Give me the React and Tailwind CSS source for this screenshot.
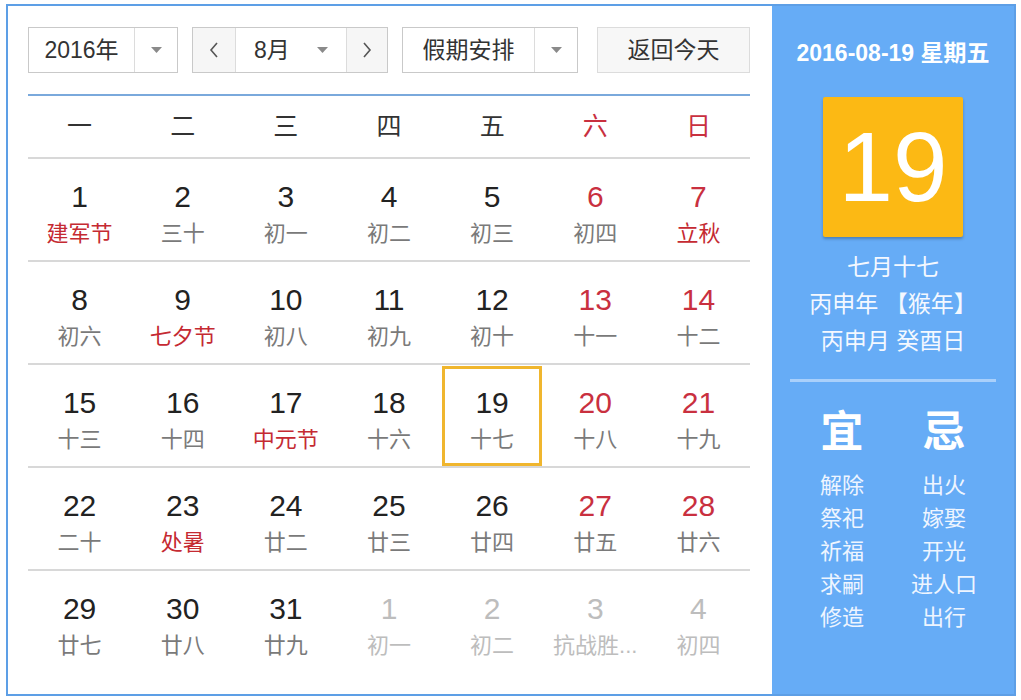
const FONT = { fontFamily: '"Liberation Sans", Arial, "Noto Sans CJK SC", sans-serif' };

const weeks = [
  [
    { d: 1, l: "建军节", fest: true },
    { d: 2, l: "三十" },
    { d: 3, l: "初一" },
    { d: 4, l: "初二" },
    { d: 5, l: "初三" },
    { d: 6, l: "初四", wk: true },
    { d: 7, l: "立秋", wk: true, fest: true },
  ],
  [
    { d: 8, l: "初六" },
    { d: 9, l: "七夕节", fest: true },
    { d: 10, l: "初八" },
    { d: 11, l: "初九" },
    { d: 12, l: "初十" },
    { d: 13, l: "十一", wk: true },
    { d: 14, l: "十二", wk: true },
  ],
  [
    { d: 15, l: "十三" },
    { d: 16, l: "十四" },
    { d: 17, l: "中元节", fest: true },
    { d: 18, l: "十六" },
    { d: 19, l: "十七", today: true },
    { d: 20, l: "十八", wk: true },
    { d: 21, l: "十九", wk: true },
  ],
  [
    { d: 22, l: "二十" },
    { d: 23, l: "处暑", fest: true },
    { d: 24, l: "廿二" },
    { d: 25, l: "廿三" },
    { d: 26, l: "廿四" },
    { d: 27, l: "廿五", wk: true },
    { d: 28, l: "廿六", wk: true },
  ],
  [
    { d: 29, l: "廿七" },
    { d: 30, l: "廿八" },
    { d: 31, l: "廿九" },
    { d: 1, l: "初一", other: true },
    { d: 2, l: "初二", other: true },
    { d: 3, l: "抗战胜...", other: true },
    { d: 4, l: "初四", other: true },
  ],
];

const weekdays = ["一", "二", "三", "四", "五", "六", "日"];
const yi = ["解除", "祭祀", "祈福", "求嗣", "修造"];
const ji = ["出火", "嫁娶", "开光", "进人口", "出行"];

function Caret() {
  return (
    <svg width="11" height="6" viewBox="0 0 11 6">
      <path d="M0 0 L11 0 L5.5 6 Z" fill="#8a8a8a" />
    </svg>
  );
}

function Chevron({ dir }) {
  return (
    <svg width="10" height="16" viewBox="0 0 10 16">
      <path
        d={dir === "left" ? "M8 1 L2 8 L8 15" : "M2 1 L8 8 L2 15"}
        fill="none"
        stroke="#555"
        strokeWidth="1.6"
      />
    </svg>
  );
}

function DayCell({ day }) {
  let numColor = "text-[#222]";
  if (day.wk) numColor = "text-[#c9303f]";
  if (day.other) numColor = "text-[#bdbdbd]";

  let lunarColor = "text-[#7a7a7a]";
  if (day.fest) lunarColor = "text-[#c52a32]";
  if (day.other) lunarColor = "text-[#bdbdbd]";

  const box = day.today
    ? "border-[3px] border-[#f0b62e] pt-[15px]"
    : "pt-[18px]";

  return (
    <div className="h-[101px] flex items-center justify-center">
      <div className={`w-[100px] h-[100px] flex flex-col items-center ${box}`}>
        <span className={`text-[30px] leading-[38px] ${numColor}`}>{day.d}</span>
        <span className={`text-[22px] leading-[36px] whitespace-nowrap ${lunarColor}`}>{day.l}</span>
      </div>
    </div>
  );
}

export default function App() {
  return (
    <div className="bg-white w-[1021px] h-[700px] pt-[4px] pl-[6px]" style={FONT}>
      <div className="w-[1010px] h-[692px] border-2 border-[#5d9fe6] flex">
        {/* left: month grid */}
        <div className="w-[764px] pl-[20px] pr-[22px] pt-[21px] bg-white">
          <div className="flex items-center h-[46px] text-[23px] text-[#333]">
            <div className="w-[150px] h-full flex border border-[#c9c9c9]">
              <span className="w-[105px] flex items-center justify-center">2016年</span>
              <span className="flex-1 flex items-center justify-center border-l border-[#dcdcdc]">
                <Caret />
              </span>
            </div>
            <div className="ml-[14px] w-[196px] h-full flex border border-[#c9c9c9]">
              <span className="w-[43px] flex items-center justify-center bg-[#f6f6f6] border-r border-[#dcdcdc]">
                <Chevron dir="left" />
              </span>
              <span className="flex-1 flex items-center justify-between pl-[18px] pr-[18px]">
                8月
                <Caret />
              </span>
              <span className="w-[41px] flex items-center justify-center bg-[#f6f6f6] border-l border-[#dcdcdc]">
                <Chevron dir="right" />
              </span>
            </div>
            <div className="ml-[14px] w-[176px] h-full flex border border-[#c9c9c9]">
              <span className="w-[131px] flex items-center justify-center">假期安排</span>
              <span className="flex-1 flex items-center justify-center border-l border-[#dcdcdc]">
                <Caret />
              </span>
            </div>
            <div className="ml-[19px] w-[153px] h-full flex items-center justify-center border border-[#dcdcdc] bg-[#f7f7f7]">
              返回今天
            </div>
          </div>

          <div className="mt-[21px] h-[2px] bg-[#7aa9dc]" />

          <div className="grid grid-cols-7 h-[63px] items-center border-b-2 border-[#d8d8d8] text-[25px]">
            {weekdays.map((w, i) => (
              <span
                key={w}
                className={`text-center ${i >= 5 ? "text-[#c9303f]" : "text-[#333]"}`}
              >
                {w}
              </span>
            ))}
          </div>

          {weeks.map((row, ri) => (
            <div
              key={ri}
              className={`grid grid-cols-7 ${ri < weeks.length - 1 ? "border-b-2 border-[#d8d8d8]" : ""}`}
            >
              {row.map((day, di) => (
                <DayCell key={di} day={day} />
              ))}
            </div>
          ))}
        </div>

        {/* right: today panel */}
        <div className="flex-1 bg-[#66acf6] flex flex-col items-center text-white">
          <div className="mt-[32px] text-[23px] font-bold leading-[30px]">
            2016-08-19 星期五
          </div>
          <div className="mt-[29px] w-[140px] h-[140px] bg-[#fcb914] rounded-[2px] shadow-[0_2px_3px_rgba(0,0,0,0.25)] flex items-center justify-center">
            <span className="text-[98px] leading-none">19</span>
          </div>
          <div className="mt-[12px] flex flex-col items-center text-[23px] leading-[37px] text-[#f4f8ff]">
            <span>七月十七</span>
            <span>丙申年 【猴年】</span>
            <span>丙申月 癸酉日</span>
          </div>
          <div className="mt-[19px] w-[206px] h-[3px] bg-[#a9d0fb]" />
          <div className="mt-[25px] flex w-[204px]">
            <div className="w-[102px] flex flex-col items-center">
              <span className="text-[43px] font-bold leading-[50px]">宜</span>
              <div className="mt-[12px] flex flex-col items-center text-[22px] leading-[33px] text-[#eef5ff]">
                {yi.map((t) => (
                  <span key={t}>{t}</span>
                ))}
              </div>
            </div>
            <div className="w-[102px] flex flex-col items-center">
              <span className="text-[43px] font-bold leading-[50px]">忌</span>
              <div className="mt-[12px] flex flex-col items-center text-[22px] leading-[33px] text-[#eef5ff]">
                {ji.map((t) => (
                  <span key={t}>{t}</span>
                ))}
              </div>
            </div>
          </div>
        </div>
      </div>
    </div>
  );
}
